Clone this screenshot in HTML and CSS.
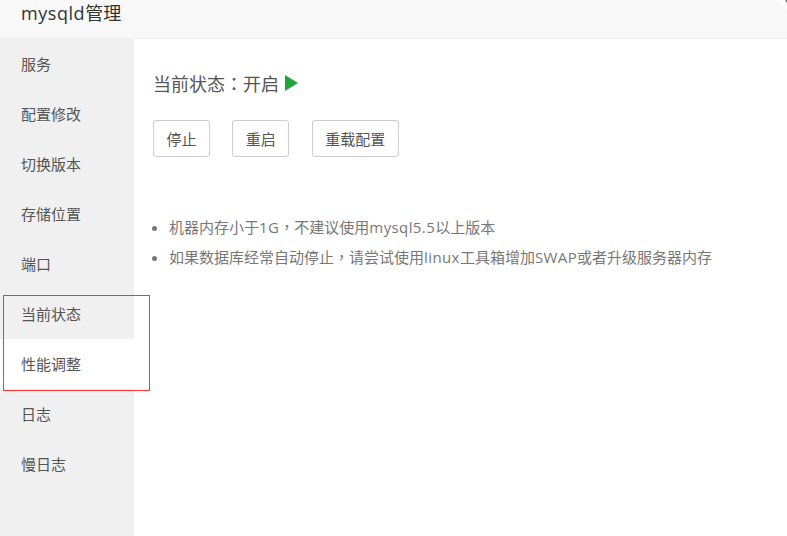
FILE: index.html
```html
<!DOCTYPE html>
<html lang="zh-CN">
<head>
  <meta charset="UTF-8" />
  <title>mysqld管理</title>
  <link rel="stylesheet" href="styles.css">
</head>
<body>

<div class="layer">
  <div class="layer-title"><span class="latin-title">mysqld</span>管理</div>
  <svg class="layer-close" width="12" height="10" viewBox="0 0 12 10">
    <path d="M2 0 L12 0 L12 10 Z" fill="#fff"/>
    <path d="M10 0 L12 0 L12 3 Z" fill="#777"/>
  </svg>

  <div class="layer-body">
    <ul class="side-menu">
      <li>服务</li>
      <li>配置修改</li>
      <li>切换版本</li>
      <li>存储位置</li>
      <li>端口</li>
      <li>当前状态</li>
      <li class="active">性能调整</li>
      <li>日志</li>
      <li>慢日志</li>
    </ul>

    <div class="content">
      <p class="status"><span>当前状态<span class="punct" lang="zh-TW">：</span>开启</span><span class="status-on"></span></p>
      <div class="actions">
        <button class="btn">停止</button>
        <button class="btn">重启</button>
        <button class="btn">重载配置</button>
      </div>
      <ul class="help-list">
        <li>机器内存小于<span class="latin">1G</span><span class="punct" lang="zh-TW">，</span>不建议使用<span class="latin">mysql5.5</span>以上版本</li>
        <li>如果数据库经常自动停止<span class="punct" lang="zh-TW">，</span>请尝试使用<span class="latin">linux</span>工具箱增加<span class="latin">SWAP</span>或者升级服务器内存</li>
      </ul>
    </div>
  </div>

  <div class="mark-box"></div>
</div>

</body>
</html>
```

FILE: styles.css
```css
html, body {
  margin: 0;
  padding: 0;
  height: 100%;
  background-color: #fff;
  overflow: hidden;
}

body {
  font-family: 'Open Sans', 'Noto Sans CJK SC', sans-serif;
  color: #555;
}

.punct {
  font-family: 'Noto Sans CJK TC', sans-serif;
}

.latin {
  letter-spacing: 0.4px;
}

.latin-title {
  letter-spacing: 0.55px;
}

.layer {
  position: relative;
  width: 787px;
  height: 536px;
  overflow: hidden;
}

.layer-title {
  box-sizing: border-box;
  height: 39px;
  padding-left: 21px;
  font-size: 18px;
  line-height: 27px;
  color: #333;
  background-color: #f8f8f8;
  border-bottom: 1px solid #eee;
}

.layer-close {
  position: absolute;
  top: 0;
  right: 0;
}

.layer-body {
  display: flex;
  height: 497px;
}

.side-menu {
  width: 134px;
  margin: 0;
  padding: 0;
  list-style: none;
  background-color: #f0f0f0;
}

.side-menu li {
  height: 50px;
  padding-left: 21px;
  font-size: 15px;
  line-height: 50px;
  color: #555;
}

.side-menu li.active {
  background-color: #fff;
}

.content {
  flex: 1;
  padding: 32px 19px 0;
}

.status {
  display: flex;
  align-items: center;
  gap: 6px;
  margin: 0;
  height: 24px;
  font-size: 18px;
  line-height: 24px;
  color: #555;
}

.status-on {
  width: 0;
  height: 0;
  border-left: 13px solid #20a53a;
  border-top: 8px solid transparent;
  border-bottom: 8px solid transparent;
}

.actions {
  display: flex;
  gap: 22.3px;
  margin-top: 25px;
}

.btn {
  height: 37px;
  padding: 0 12.5px;
  font-family: inherit;
  font-size: 15px;
  color: #555;
  background-color: #fff;
  border: 1px solid #ccc;
  border-radius: 3px;
}

.help-list {
  margin: 55px 0 0;
  padding-left: 16px;
  font-size: 15px;
  line-height: 30px;
  color: #777;
}

.mark-box {
  position: absolute;
  left: 3px;
  top: 295px;
  width: 145px;
  height: 94px;
  border: 1px solid #f33;
}
```
